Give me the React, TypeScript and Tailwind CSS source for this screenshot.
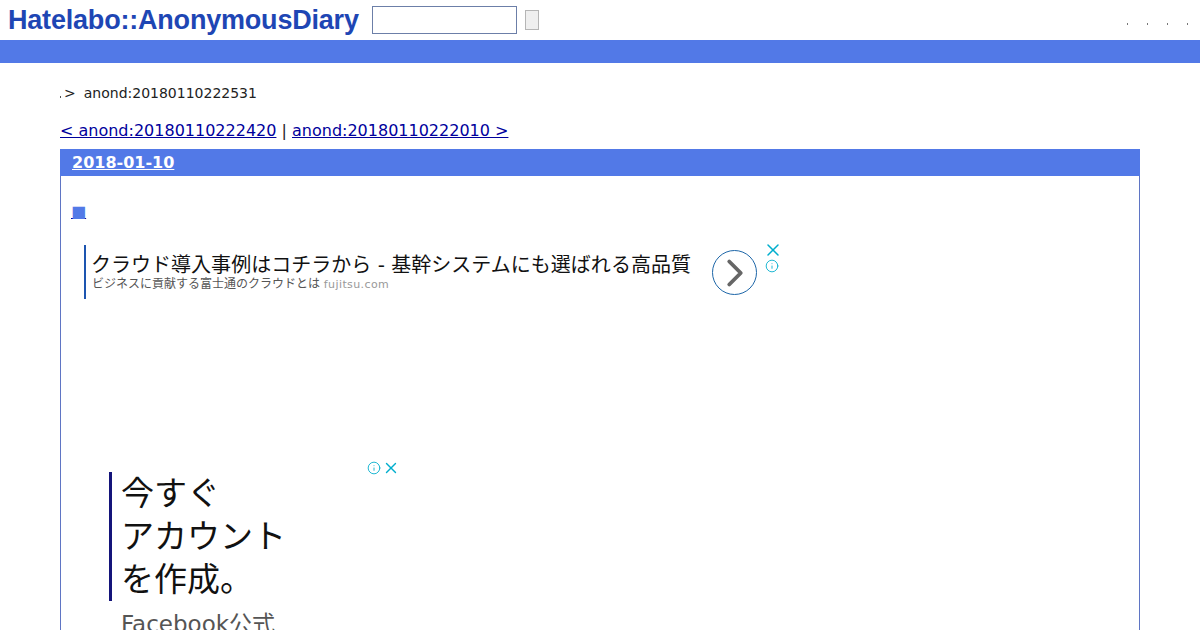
import { ChevronRight, Info, X } from "lucide-react";

const CJK = "font-['DejaVu_Sans','Noto_Sans_CJK_JP',sans-serif]";

function Header() {
  return (
    <header className="flex h-10 items-center">
      <a className="ml-[8px] w-[364px] shrink-0 whitespace-nowrap font-['Liberation_Sans',sans-serif] text-[27px] font-bold tracking-[-0.2px] text-[#1e46b4]">
        Hatelabo::AnonymousDiary
      </a>
      <input className="h-[28px] w-[145px] border border-[#6c7fa8] bg-white" />
      <button className="ml-2 h-[20px] w-[14px] border border-[#b5b5b5] bg-[#efefef]" />
      <div className="ml-auto mr-[12px] mt-[7px] flex gap-[19px]">
        <span className="h-[2px] w-px bg-[#777]" />
        <span className="h-[2px] w-px bg-[#777]" />
        <span className="h-[2px] w-px bg-[#777]" />
        <span className="h-[2px] w-px bg-[#777]" />
      </div>
    </header>
  );
}

function WideAd() {
  return (
    <div className="relative ml-[23px] mt-[23px] flex h-[54px] w-[700px] border-l-2 border-[#1d55b0] pl-[6px]">
      <div className="pt-[8px]">
        <div className={`${CJK} -ml-px whitespace-nowrap text-[20px] leading-[24px] tracking-[0.02px] text-[#111]`}>
          クラウド導入事例はコチラから - 基幹システムにも選ばれる高品質
        </div>
        <div className={`${CJK} -mt-[1px] whitespace-nowrap text-[12px] leading-[16px] text-[#555]`}>
          ビジネスに貢献する富士通のクラウドとは{" "}
          <span className="text-[11px] tracking-[0.4px] text-[#999]">fujitsu.com</span>
        </div>
      </div>
      <div className="absolute left-[626px] top-[5px] flex h-[45px] w-[45px] items-center justify-center rounded-full border border-[#1d66a8]">
        <ChevronRight className="h-[46px] w-[46px] shrink-0 text-[#666]" strokeWidth={2} />
      </div>
      <X className="absolute left-[677px] top-[-5px] h-[20px] w-[20px] text-[#00aecd]" strokeWidth={1.8} />
      <Info className="absolute left-[679px] top-[14px] h-[14px] w-[14px] text-[#00aecd]" strokeWidth={1.5} />
    </div>
  );
}

function SquareAd() {
  return (
    <div className="relative ml-[48px] mt-[173px] w-[288px]">
      <div className="border-l-[3px] border-[#14147a] pl-[9px]">
        <div className={`${CJK} text-[33px] leading-[43px] text-[#111]`}>
          今すぐ
          <br />
          アカウント
          <br />
          を作成。
        </div>
      </div>
      <div className={`${CJK} ml-[12px] mt-[8px] text-[23px] leading-[30px] text-[#555]`}>Facebook公式</div>
      <Info className="absolute left-[258px] top-[-11px] h-[14px] w-[14px] text-[#00aecd]" strokeWidth={1.5} />
      <X className="absolute left-[273px] top-[-13px] h-[18px] w-[18px] text-[#00aecd]" strokeWidth={1.8} />
    </div>
  );
}

export default function App() {
  return (
    <div className="h-[630px] overflow-hidden bg-white font-['DejaVu_Sans',sans-serif] text-[#222]">
      <Header />
      <div className="h-[23px] bg-[#5279e7]" />

      <main className="mx-[60px]">
        <div className="mt-[21px] flex h-[18px] items-center text-[14px] leading-[18px]">
          <span className="mt-[8px] h-[2px] w-[1px] bg-[#555]" />
          <span className="ml-[3px]">&gt;</span>
          <span className="ml-[8px]">anond:20180110222531</span>
        </div>

        <div className="mt-[19px] h-[19px] whitespace-nowrap text-[16px] leading-[19px]">
          <a className="text-[#00009c] underline">&lt; anond:20180110222420</a>
          {" | "}
          <a className="text-[#00009c] underline">anond:20180110222010 &gt;</a>
        </div>

        <section className="mt-[9px] h-[600px] border border-[#5f75c4]">
          <h2 className="-mx-px -mt-px h-[27px] bg-[#5279e7] pl-[12px] pt-px text-[16px] font-bold leading-[25px] text-white">
            <a className="underline">2018-01-10</a>
          </h2>
          <div className="ml-[10px] mt-[25px] h-[21px] text-[16px] leading-[21px]">
            <a className="text-[#5279e7] underline decoration-[#00009c]">■</a>
          </div>
          <WideAd />
          <SquareAd />
        </section>
      </main>
    </div>
  );
}
